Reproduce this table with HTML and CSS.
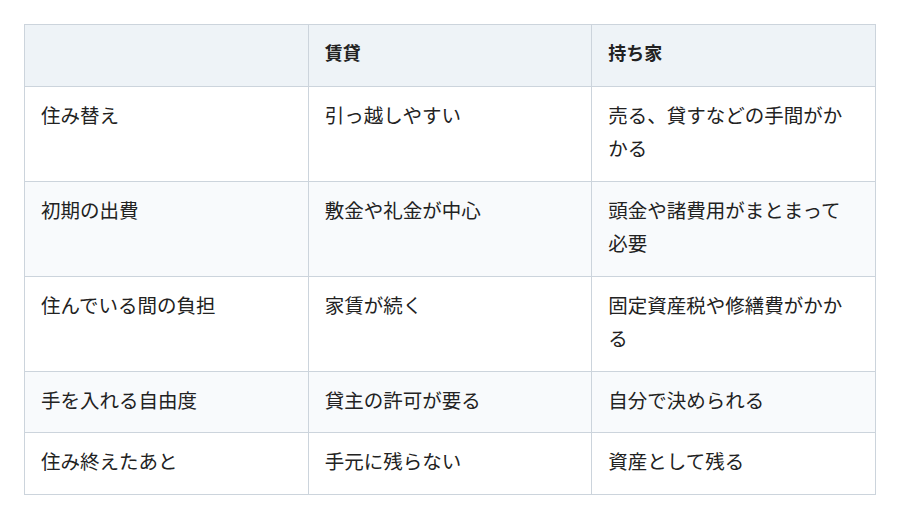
FILE: index.html
```html
<!DOCTYPE html>
<html lang="ja">
<head>
<meta charset="utf-8">
<link rel="stylesheet" href="styles.css">
</head>
<body>
<table class="cmp">
  <thead>
    <tr><th></th><th>賃貸</th><th>持ち家</th></tr>
  </thead>
  <tbody>
    <tr><td>住み替え</td><td>引っ越しやすい</td><td>売る、貸すなどの手間がかかる</td></tr>
    <tr><td>初期の出費</td><td>敷金や礼金が中心</td><td>頭金や諸費用がまとまって必要</td></tr>
    <tr><td>住んでいる間の負担</td><td>家賃が続く</td><td>固定資産税や修繕費がかかる</td></tr>
    <tr><td>手を入れる自由度</td><td>貸主の許可が要る</td><td>自分で決められる</td></tr>
    <tr><td>住み終えたあと</td><td>手元に残らない</td><td>資産として残る</td></tr>
  </tbody>
</table>
</body>
</html>
```
FILE: styles.css
```css
html, body { margin: 0; background: #fff; }
body {
  padding: 24px;
  font-family: "Noto Sans CJK JP", "Noto Sans", sans-serif;
  color: #222;
}
.cmp {
  width: 852px;
  border-collapse: collapse;
  table-layout: fixed;
  font-size: 19.5px;
  line-height: 33.5px;
}
.cmp th, .cmp td {
  border: 1.5px solid #ccd4dc;
  padding: 11px 16px 16px;
  text-align: left;
  vertical-align: top;
  font-weight: 400;
}
.cmp th {
  background: #eef3f7;
  font-weight: 700;
  font-size: 18px;
}
.cmp tbody tr:nth-child(even) td { background: #f8fafc; }
```
